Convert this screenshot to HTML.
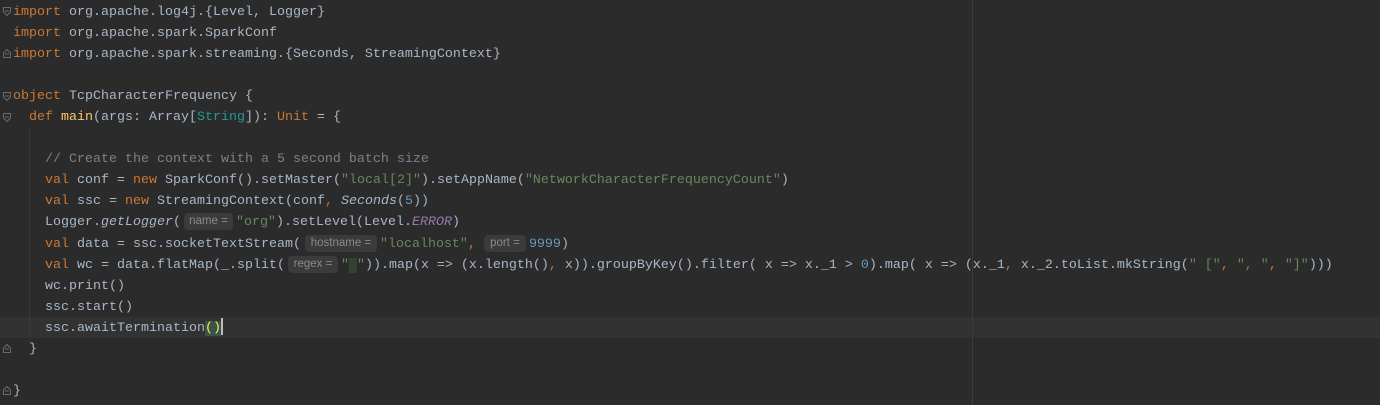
<!DOCTYPE html>
<html><head><meta charset="utf-8"><style>
html,body{margin:0;padding:0;background:#2b2b2b;width:1380px;height:405px;overflow:hidden;position:relative}
.code{position:absolute;left:13px;top:2px;font-family:"Liberation Mono",monospace;font-size:13.33px;color:#a9b7c6}
.l{height:21.05px;line-height:21px;position:relative;white-space:pre}
.k{color:#cc7832}.s{color:#6a8759}.c{color:#808080}.n{color:#6897bb}.f{color:#ffc66d}.t{color:#20999d}.i{font-style:italic}.p{color:#9876aa;font-style:italic}
.h{display:inline-block;height:17px;line-height:17px;vertical-align:1px;background:#3b3b3b;color:#8a8a8a;font-family:"Liberation Sans",sans-serif;font-size:11.5px;border-radius:4px;margin:0 3px 0 3px;text-align:center}
.cur{position:absolute;left:0;top:317px;width:1380px;height:21px;background:#323232}
.guide{position:absolute;width:1px;background:#3a3a3a}
.fold{position:absolute;left:3px;width:8px;height:9px}
.bm{background:#3b514d;color:#ffef28}
</style></head><body>
<div class="cur"></div>
<div style="position:absolute;left:972px;top:0;width:1px;height:405px;background:#3c3c3c"></div>
<div class="guide" style="left:29px;top:128px;height:210px"></div>
<svg class="fold" style="top:7px" viewBox="0 0 8 9"><path d="M0.5 0.5H7.5V5L4 8.5L0.5 5Z" fill="none" stroke="#6b6b6b"/><path d="M2 4H6" stroke="#6b6b6b"/></svg>
<svg class="fold" style="top:49px" viewBox="0 0 8 9"><path d="M0.5 8.5H7.5V4L4 0.5L0.5 4Z" fill="none" stroke="#6b6b6b"/><path d="M2 5H6" stroke="#6b6b6b"/></svg>
<svg class="fold" style="top:92px" viewBox="0 0 8 9"><path d="M0.5 0.5H7.5V5L4 8.5L0.5 5Z" fill="none" stroke="#6b6b6b"/><path d="M2 4H6" stroke="#6b6b6b"/></svg>
<svg class="fold" style="top:113px" viewBox="0 0 8 9"><path d="M0.5 0.5H7.5V5L4 8.5L0.5 5Z" fill="none" stroke="#6b6b6b"/><path d="M2 4H6" stroke="#6b6b6b"/></svg>
<svg class="fold" style="top:344px" viewBox="0 0 8 9"><path d="M0.5 8.5H7.5V4L4 0.5L0.5 4Z" fill="none" stroke="#6b6b6b"/><path d="M2 5H6" stroke="#6b6b6b"/></svg>
<svg class="fold" style="top:386px" viewBox="0 0 8 9"><path d="M0.5 8.5H7.5V4L4 0.5L0.5 4Z" fill="none" stroke="#6b6b6b"/><path d="M2 5H6" stroke="#6b6b6b"/></svg>
<div class="code"><div class="l"><span class="k">import</span> org.apache.log4j.{Level, Logger}</div><div class="l"><span class="k">import</span> org.apache.spark.SparkConf</div><div class="l"><span class="k">import</span> org.apache.spark.streaming.{Seconds, StreamingContext}</div><div class="l"> </div><div class="l"><span class="k">object</span> TcpCharacterFrequency {</div><div class="l">  <span class="k">def</span> <span class="f">main</span>(args: Array[<span class="t">String</span>]): <span class="k">Unit</span> = {</div><div class="l"> </div><div class="l">    <span class="c">// Create the context with a 5 second batch size</span></div><div class="l">    <span class="k">val</span> conf = <span class="k">new</span> SparkConf().setMaster(<span class="s">"local[2]"</span>).setAppName(<span class="s">"NetworkCharacterFrequencyCount"</span>)</div><div class="l">    <span class="k">val</span> ssc = <span class="k">new</span> StreamingContext(conf<span class="k">,</span> <span class="i">Seconds</span>(<span class="n">5</span>))</div><div class="l">    Logger.<span class="i">getLogger</span>(<span class="h" style="width:49px">name =</span><span class="s">"org"</span>).setLevel(Level.<span class="p">ERROR</span>)</div><div class="l">    <span class="k">val</span> data = ssc.socketTextStream(<span class="h" style="width:72px;margin-left:4px">hostname =</span><span class="s">"localhost"</span><span class="k">,</span> <span class="h" style="width:42px;margin-left:0">port =</span><span class="n">9999</span>)</div><div class="l">    <span class="k">val</span> wc = data.flatMap(_.split(<span class="h" style="width:50px">regex =</span><span class="s">"<span style="background:#344134"> </span>"</span>)).map(x =&gt; (x.length()<span class="k">,</span> x)).groupByKey().filter( x =&gt; x._1 &gt; <span class="n">0</span>).map( x =&gt; (x._1<span class="k">,</span> x._2.toList.mkString(<span class="s">" ["</span><span class="k">,</span> <span class="s">", "</span><span class="k">,</span> <span class="s">"]"</span>)))</div><div class="l">    wc.print()</div><div class="l">    ssc.start()</div><div class="l">    ssc.awaitTermination<span class="bm">()</span><span style="display:inline-block;width:2px;height:17px;background:#bbbbbb;vertical-align:-4px"></span></div><div class="l">  }</div><div class="l"> </div><div class="l">}</div></div>
</body></html>
